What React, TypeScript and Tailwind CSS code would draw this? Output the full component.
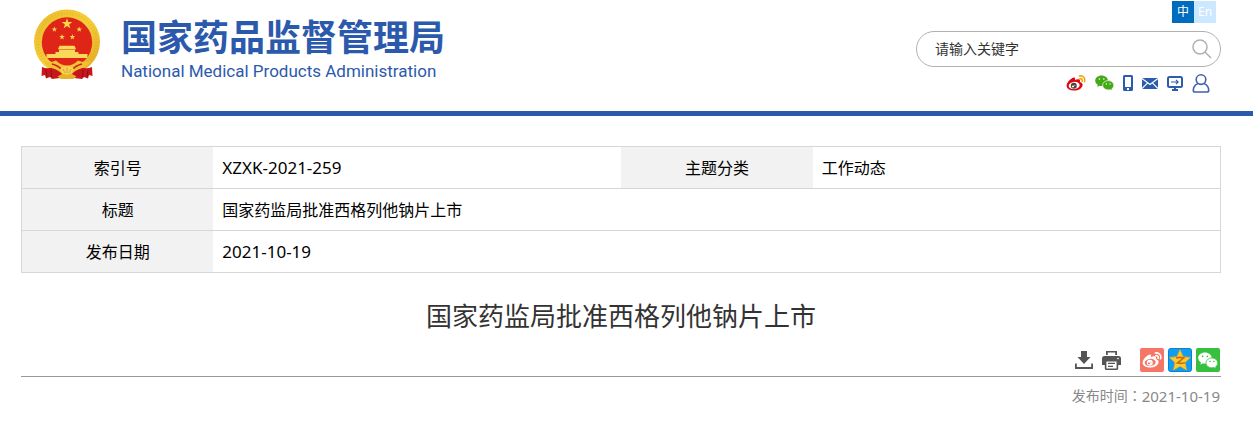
import type { ReactNode } from "react";

const SANS = "font-['Noto_Sans','Noto_Sans_CJK_SC',sans-serif]";

function starPoints(cx: number, cy: number, r: number) {
  return Array.from({ length: 10 }, (_, i) => {
    const radius = i % 2 === 0 ? r : r * 0.4;
    const a = (Math.PI / 5) * i - Math.PI / 2;
    return `${(cx + radius * Math.cos(a)).toFixed(2)},${(cy + radius * Math.sin(a)).toFixed(2)}`;
  }).join(" ");
}

function Emblem() {
  return (
    <svg viewBox="0 0 68 72" className="w-[68px] h-[72px] shrink-0" aria-hidden="true">
      <defs>
        <linearGradient id="gold" x1="0" y1="0" x2="1" y2="1">
          <stop offset="0" stopColor="#e9b92c" />
          <stop offset="0.5" stopColor="#f6cf3a" />
          <stop offset="1" stopColor="#dfa520" />
        </linearGradient>
      </defs>
      <ellipse cx="34" cy="33" rx="33" ry="32.5" fill="url(#gold)" />
      <ellipse cx="34" cy="33" rx="29" ry="28.5" fill="none" stroke="#d9a11f" strokeWidth="3" strokeDasharray="1 2" opacity="0.35" />
      <circle cx="34" cy="33.5" r="25.2" fill="#df2418" />
      {/* Red drapery */}
      <path d="M9 58 Q16 61 22 57 L34 60 L46 57 Q52 61 59 58 L59.5 67 L56 66 L55 69.5 L51 68 L49 70 L41 69 L34 70 L27 69 L19 70 L17 68 L13 69.5 L12 66 L8.5 67 Z" fill="#c8161d" />
      <path d="M13 61 L14 68 M18 61 L18.5 68 M55 61 L54 68 M50 61 L49.5 68" stroke="#960d12" strokeWidth="1" />
      {/* Tiananmen */}
      <path d="M26.5 36.8 H41.5 L43 40 H25 Z M26 40.8 H42 V44 H26 Z M22.5 43 H45.5 V45 H54.5 V49 H13.5 V45 H22.5 Z" fill="#f9d85a" />
      <path d="M25.5 40.5 H42.5" stroke="#d9a02a" strokeWidth="0.8" />
      {/* Wheat and gear */}
      <path d="M10.5 52 Q16 54.5 23 51.5 Q28 56.5 34 56.5 Q40 56.5 45 51.5 Q52 54.5 57.5 52 Q54 58 48 59.5 Q42 61 39 65 L34 68 L29 65 Q26 61 20 59.5 Q14 58 10.5 52 Z" fill="#f0c133" />
      <path d="M19 55 Q25 56.5 28 60 M49 55 Q43 56.5 40 60" fill="none" stroke="#c9231b" strokeWidth="1.4" />
      <path d="M27 60 Q34 54 41 60 L38 65 H30 Z" fill="#f7d355" />
      <path d="M30 60 L32 64 M34 58.6 V64 M38 60 L36 64" stroke="#d49a1d" strokeWidth="0.9" />
      <path d="M24.5 67.5 L30 64.5 L34 66.5 L38 64.5 L43.5 67.5 L40 70 H28 Z" fill="#e7b22b" />
      <polygon points={starPoints(34, 14.8, 5.6)} fill="#fbd64a" />
      <polygon points={starPoints(21.4, 20.4, 3)} fill="#fbd64a" />
      <polygon points={starPoints(46.2, 20.4, 3)} fill="#fbd64a" />
      <polygon points={starPoints(29, 28, 3)} fill="#fbd64a" />
      <polygon points={starPoints(39.4, 28, 3)} fill="#fbd64a" />
    </svg>
  );
}

type WeiboProps = { body: string; eye: string; pupil: string; signal: string; className: string };

function Weibo({ body, eye, pupil, signal, className }: WeiboProps) {
  return (
    <svg viewBox="0 0 20 16" className={className} aria-hidden="true">
      <path d="M7.6 2.6 C9 2.2 9.4 3.2 8.9 4.9 C11 4 13.6 3.7 14 5.2 C14.2 5.9 13.9 6.4 13.8 6.9 C15.6 7.4 16.8 8.4 16.6 10.2 C16.2 13.2 12.6 15.6 8.2 15.6 C3.8 15.6 0.6 13.8 0.6 10.8 C0.6 7.8 4.6 3.4 7.6 2.6 Z" fill={body} />
      <ellipse cx="8.2" cy="10.5" rx="5.5" ry="3.6" fill={eye} transform="rotate(-8 8.2 10.5)" />
      <circle cx="7.8" cy="10.7" r="3" fill={pupil} />
      <ellipse cx="7" cy="11.4" rx="1.1" ry="0.9" fill={eye} />
      <circle cx="8.9" cy="10.2" r="0.5" fill={eye} />
      <path d="M13.4 1 C17 0.2 19.6 3.2 18.5 6.8 M13.8 3.7 C15.5 3.4 16.6 4.7 16.1 6.3" fill="none" stroke={signal} strokeWidth="1.6" strokeLinecap="round" />
    </svg>
  );
}

type WechatProps = { bubble: string; gap: string; className: string };

function Wechat({ bubble, gap, className }: WechatProps) {
  return (
    <svg viewBox="0 0 19 16" className={className} aria-hidden="true">
      <path d="M6.6 0.4 C10.2 0.4 13 2.7 13 5.7 C13 8.7 10.2 11 6.6 11 C5.9 11 5.2 10.9 4.6 10.7 L2.3 12 L2.8 9.8 C1.2 8.9 0.2 7.4 0.2 5.7 C0.2 2.7 3 0.4 6.6 0.4 Z" fill={bubble} />
      <path d="M13.2 5.6 C16.4 5.6 18.8 7.7 18.8 10.3 C18.8 11.8 18 13.1 16.8 13.9 L17.2 15.8 L15.3 14.7 C14.6 14.9 13.9 15 13.2 15 C10 15 7.6 12.9 7.6 10.3 C7.6 7.7 10 5.6 13.2 5.6 Z" fill={bubble} stroke={gap} strokeWidth="0.7" />
      <circle cx="4.4" cy="4" r="0.8" fill={gap} />
      <circle cx="8.8" cy="4" r="0.8" fill={gap} />
      <circle cx="11.4" cy="9" r="0.7" fill={gap} />
      <circle cx="15" cy="9" r="0.7" fill={gap} />
    </svg>
  );
}

function PhoneIcon() {
  return (
    <svg viewBox="0 0 10 16" className="w-2.5 h-4" aria-hidden="true">
      <path fillRule="evenodd" d="M1.5 0 H8.5 Q10 0 10 1.5 V14.5 Q10 16 8.5 16 H1.5 Q0 16 0 14.5 V1.5 Q0 0 1.5 0 Z M2 2 V12 H8 V2 Z M4 13 V15 H6 V13 Z" fill="#2b5cad" />
    </svg>
  );
}

function MailIcon() {
  return (
    <svg viewBox="0 0 16 11" className="w-4 h-[11px]" aria-hidden="true">
      <path d="M0 0 H16 V11 H0 Z" fill="#2b5cad" />
      <path d="M0 0.6 L8 6.6 L16 0.6 M0 10.6 L5.4 5.2 M16 10.6 L10.6 5.2" fill="none" stroke="#fff" strokeWidth="1.2" />
    </svg>
  );
}

function MonitorIcon() {
  return (
    <svg viewBox="0 0 16 15" className="w-4 h-[15px]" aria-hidden="true" fill="none" stroke="#2b5cad">
      <rect x="1" y="1" width="14" height="10" rx="1.5" strokeWidth="2" />
      <path d="M4 6 H11 M9 3.8 L11.2 6 L9 8.2" strokeWidth="1.1" />
      <path d="M8 11 V14 M5 14 H11" strokeWidth="2" />
    </svg>
  );
}

function UserIcon() {
  return (
    <svg viewBox="0 0 18 19" className="w-[18px] h-[19px]" aria-hidden="true" fill="none" stroke="#3f5fb0" strokeWidth="1.6">
      <circle cx="9" cy="5.6" r="4.8" />
      <path d="M5.8 9.6 C2.8 11 1.3 13.4 1.3 16.2 Q1.3 18 3 18 H15 Q16.7 18 16.7 16.2 C16.7 13.4 15.2 11 12.2 9.6" />
    </svg>
  );
}

function SearchIcon() {
  return (
    <svg viewBox="0 0 20 20" className="size-5" aria-hidden="true" fill="none" stroke="#b0b0b0" strokeWidth="1.5">
      <circle cx="8" cy="8" r="7" />
      <path d="M13 13 L19 19" />
    </svg>
  );
}

function DownloadIcon() {
  return (
    <svg viewBox="0 0 18 18" className="size-[18px]" aria-hidden="true" fill="#555">
      <path d="M6 0 H12 V6 H15.5 L9 13 L2.5 6 H6 Z" />
      <path d="M0 12.5 H1.8 V16 H16.2 V12.5 H18 V18 H0 Z" />
    </svg>
  );
}

function PrintIcon() {
  return (
    <svg viewBox="0 0 19 19" className="size-[19px]" aria-hidden="true">
      <path d="M4 0 H15 V4 H4 Z M5.8 1.6 V4 H13.2 V1.6 Z" fill="#555" fillRule="evenodd" />
      <path d="M2.5 5 H16.5 Q19 5 19 7.5 V14 H0 V7.5 Q0 5 2.5 5 Z" fill="#555" />
      <rect x="3.6" y="9.6" width="11.8" height="8.6" rx="0.8" fill="#fff" stroke="#555" strokeWidth="1.6" />
      <path d="M6 12.4 H13 M6 15.4 H11" stroke="#555" strokeWidth="1.4" />
      <circle cx="16" cy="7.6" r="0.8" fill="#fff" />
    </svg>
  );
}

function QzoneIcon() {
  return (
    <svg viewBox="0 0 24 24" className="size-6" aria-hidden="true">
      <rect x="0.5" y="0.5" width="23" height="23" rx="2" fill="#109ef0" stroke="#0b7fd0" />
      <path d="M12 1.8 L15.1 8.7 L22.4 9.5 L17 14.5 L18.5 22 L12 18.2 L5.5 22 L7 14.5 L1.6 9.5 L8.9 8.7 Z" fill="#fdcb2e" stroke="#f6a821" strokeWidth="0.8" />
      <path d="M8 9.8 Q12 9 15.8 9.8 L9.4 15 Q13 15.8 17 14.8" fill="none" stroke="#c9700d" strokeWidth="1.7" />
    </svg>
  );
}

function IconLink({ label, children }: { label: string; children: ReactNode }) {
  return (
    <a href="#" aria-label={label} className="block">
      {children}
    </a>
  );
}

const labelCls = "bg-[#f2f2f2] font-normal text-center";
const cellCls = "px-[9px]";

export default function App() {
  return (
    <div className={`min-w-0 bg-white text-black ${SANS}`}>
      <header className="border-b-5 border-[#2b5aac]">
        <div className="flex justify-between pl-[33px] pr-8 pb-[18px]">
          <a href="#" className="flex gap-5 pt-[9px] text-[#2b5aac]">
            <Emblem />
            <div className="pt-2">
              <p className="text-[36px] leading-[42px] font-bold whitespace-nowrap">国家药品监督管理局</p>
              <p className="text-[17px] leading-6 whitespace-nowrap font-[Roboto,sans-serif]">National Medical Products Administration</p>
            </div>
          </a>

          <div className="w-[305px] pt-px">
            <div className="flex justify-end pr-[5px] text-xs text-white">
              <a href="#" className="size-[22px] leading-[22px] text-center bg-[#006cbd]">中</a>
              <a href="#" className="size-[22px] leading-[22px] text-center bg-[#cce8ff]">En</a>
            </div>
            <form className="mt-2 flex items-center h-9 pl-[18px] pr-2 border border-[#b0b0b0] rounded-full">
              <input type="text" aria-label="请输入关键字" placeholder="请输入关键字" className="flex-1 min-w-0 text-sm text-[#333] placeholder:text-[#333] outline-none" />
              <button type="button" aria-label="搜索"><SearchIcon /></button>
            </form>
            <div className="mt-1.5 h-5 flex items-center justify-end gap-[9px] pr-[11px]">
              <IconLink label="微博">
                <Weibo body="#e0060f" eye="#fff" pupil="#444" signal="#f0a80a" className="w-5 h-4" />
              </IconLink>
              <IconLink label="微信">
                <Wechat bubble="#43a914" gap="#fff" className="w-[19px] h-4" />
              </IconLink>
              <IconLink label="手机"><PhoneIcon /></IconLink>
              <IconLink label="邮箱"><MailIcon /></IconLink>
              <IconLink label="客户端"><MonitorIcon /></IconLink>
              <IconLink label="用户"><UserIcon /></IconLink>
            </div>
          </div>
        </div>
      </header>

      <main className="pl-[21px] pr-8 pt-[30px]">
        <table className="w-full table-fixed border-collapse border border-[#d7d7d7] text-base">
          <colgroup>
            <col className="w-[16%]" />
            <col className="w-[34%]" />
            <col className="w-[16%]" />
            <col className="w-[34%]" />
          </colgroup>
          <tbody>
            <tr className="h-[42px] border-b border-[#d7d7d7]">
              <th scope="row" className={labelCls}>索引号</th>
              <td className={`${cellCls} text-[17px]`}>XZXK-2021-259</td>
              <th scope="row" className={labelCls}>主题分类</th>
              <td className={cellCls}>工作动态</td>
            </tr>
            <tr className="h-[42px] border-b border-[#d7d7d7]">
              <th scope="row" className={labelCls}>标题</th>
              <td colSpan={3} className={cellCls}>国家药监局批准西格列他钠片上市</td>
            </tr>
            <tr className="h-[42px]">
              <th scope="row" className={labelCls}>发布日期</th>
              <td colSpan={3} className={`${cellCls} text-[17px]`}>2021-10-19</td>
            </tr>
          </tbody>
        </table>

        <h1 className="mt-[23px] text-[26px] leading-10 text-center text-[#333]">国家药监局批准西格列他钠片上市</h1>

        <div className="mt-3 flex items-center justify-end pr-px pb-1 border-b border-[#999]">
          <div className="flex items-center gap-[9px]">
            <button type="button" aria-label="下载"><DownloadIcon /></button>
            <button type="button" aria-label="打印"><PrintIcon /></button>
          </div>
          <div className="ml-[19px] flex gap-1">
            <a href="#" aria-label="分享到微博" className="size-6 rounded-xs bg-[#f57566] flex items-center justify-center">
              <Weibo body="#fff" eye="#f57566" pupil="#fff" signal="#fff" className="w-5 h-4" />
            </a>
            <IconLink label="分享到QQ空间"><QzoneIcon /></IconLink>
            <a href="#" aria-label="分享到微信" className="size-6 rounded-xs bg-[#36c03e] flex items-center justify-center">
              <Wechat bubble="#fff" gap="#36c03e" className="w-5 h-[17px]" />
            </a>
          </div>
        </div>

        <p className="mt-1.5 flex items-center justify-end pr-px text-sm leading-6 text-[#888]">
          <span>发布时间<span className="font-['Noto_Sans_CJK_JP',sans-serif]">：</span></span>
          <time className="text-[15px]">2021-10-19</time>
        </p>
      </main>
    </div>
  );
}
